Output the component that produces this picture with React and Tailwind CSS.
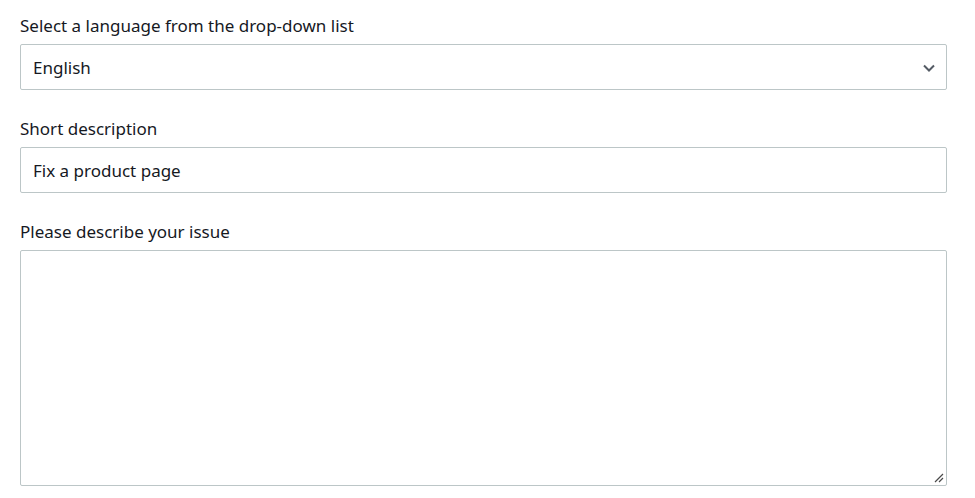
import React from 'react';

const font = { fontFamily: '"Noto Sans", "Liberation Sans", sans-serif' };

export default function App() {
  return (
    <div className="w-[975px] h-[498px] bg-white pl-5 pr-[28px] pt-[14px] text-[#16191f] text-[17px]" style={font}>
      {/* Language */}
      <label className="block leading-[24px] mb-[6px]">Select a language from the drop-down list</label>
      <div className="relative h-[46px] border border-[#bcc6c7] rounded-[2px] flex items-center px-3">
        <span className="leading-none">English</span>
        <svg className="absolute right-[10px] top-[16px]" width="14" height="14" viewBox="0 0 14 14" fill="none">
          <path d="M2 4.5 L7 9.5 L12 4.5" stroke="#545b64" strokeWidth="2" />
        </svg>
      </div>

      {/* Short description */}
      <label className="block leading-[24px] mt-[27px] mb-[6px]">Short description</label>
      <div className="h-[46px] border border-[#bcc6c7] rounded-[2px] flex items-center px-3">
        <span className="leading-none">Fix a product page</span>
      </div>

      {/* Issue */}
      <label className="block leading-[24px] mt-[27px] mb-[6px]">Please describe your issue</label>
      <div className="relative h-[236px] border border-[#bcc6c7] rounded-[2px]">
        <svg className="absolute right-[2px] bottom-[2px]" width="12" height="12" viewBox="0 0 12 12" fill="none">
          <path d="M3 11 L11 3 M7 11 L11 7" stroke="#4a4a4a" strokeWidth="1.2" />
        </svg>
      </div>
    </div>
  );
}
